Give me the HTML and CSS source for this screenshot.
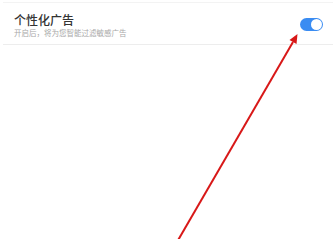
FILE: index.html
```html
<!DOCTYPE html>
<html lang="zh-CN">

<head>
  <meta charset="UTF-8" />
  <meta name="viewport" content="width=device-width, initial-scale=1.0" />
  <title>个性化广告</title>
  <link rel="stylesheet" href="styles.css">
</head>

<body>
  <div class="page">
    <div class="setting-item">
      <div class="setting-text">
        <p class="setting-title">个性化广告</p>
        <p class="setting-desc">开启后，将为您智能过滤敏感广告</p>
      </div>
      <div class="switch on">
        <span class="switch-knob"></span>
      </div>
    </div>

    <!-- 标注箭头 -->
    <svg class="arrow" width="333" height="239" viewBox="0 0 333 239">
      <line x1="177" y1="242" x2="293" y2="42" stroke="#d81818" stroke-width="2" />
      <polygon points="297.5,34 296.5,44 289.5,40" fill="#d81818" />
    </svg>
  </div>
</body>

</html>
```

FILE: styles.css
```css
* {
  box-sizing: border-box;
}

body {
  margin: 0;
  background: #fff;
  font-family: "Noto Sans CJK SC", "Noto Sans", sans-serif;
}

.page {
  position: relative;
  width: 333px;
  height: 239px;
  overflow: hidden;
  padding-top: 2px;
}

.setting-item {
  margin-left: 3px;
  padding: 9px 10px 6px 11px;
  border-top: 1px solid #f3f3f3;
  border-bottom: 1px solid #ededed;
  display: flex;
  align-items: center;
  justify-content: space-between;
}

.setting-title {
  margin: 0;
  font-size: 12px;
  font-weight: 500;
  line-height: 16px;
  color: #333;
}

.setting-desc {
  margin: 0;
  font-size: 7.5px;
  line-height: 10px;
  color: #a8a8a8;
}

.switch {
  width: 23px;
  height: 13px;
  margin-bottom: 2px;
  border-radius: 7px;
  background: #ddd;
  padding: 1px;
  display: flex;
}

.switch.on {
  background: #3a8cf2;
  justify-content: flex-end;
}

.switch-knob {
  width: 11px;
  height: 11px;
  border-radius: 50%;
  background: #fff;
}

.arrow {
  position: absolute;
  left: 0;
  top: 0;
}
```
